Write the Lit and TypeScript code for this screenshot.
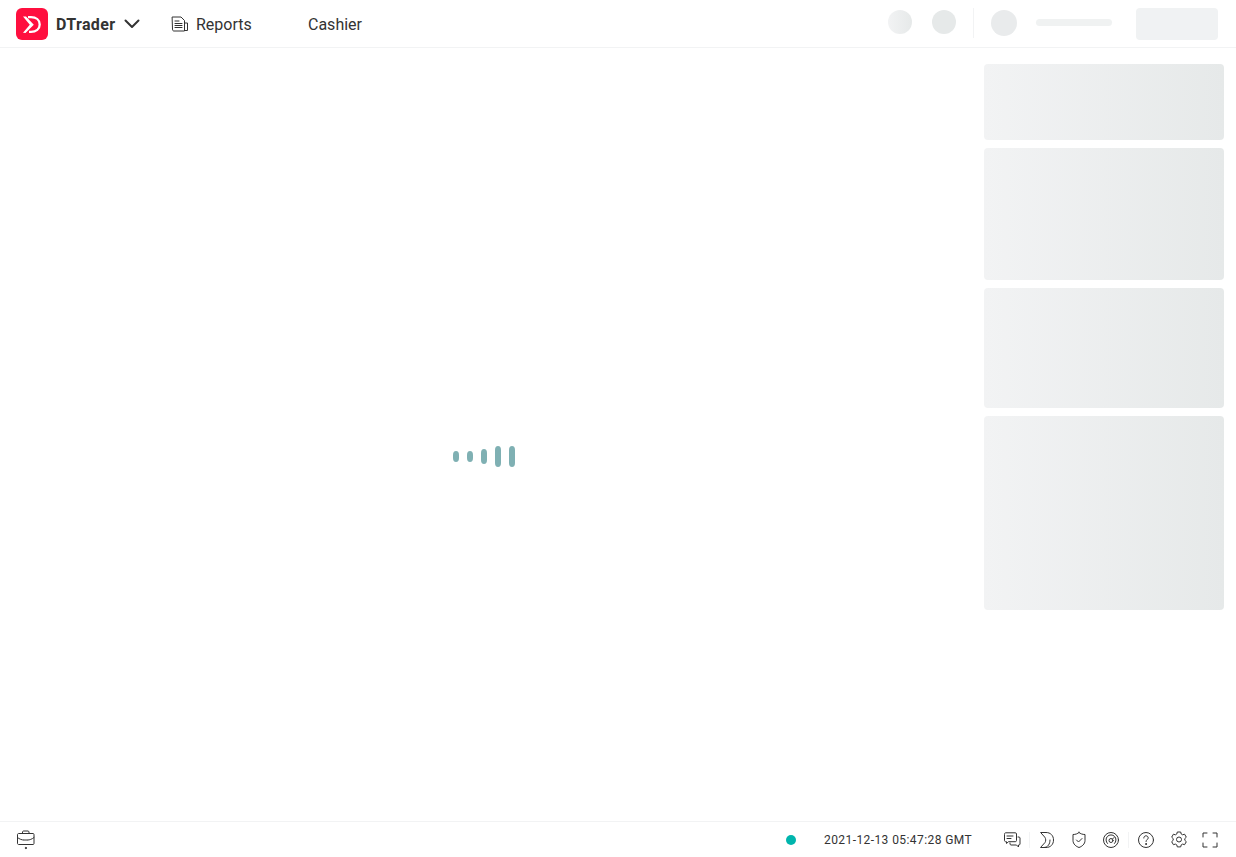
import { LitElement, html, css, svg } from "lit";
import { customElement } from "lit/decorators.js";

const ic = (w: number, h: number, body: unknown) => html`<svg width=${w} height=${h} viewBox="0 0 ${w} ${h}" fill="none" stroke="#333" stroke-width="1" stroke-linecap="round" stroke-linejoin="round">${body}</svg>`;

@customElement("app-root")
export class AppRoot extends LitElement {
  static styles = css`
    :host { display: flex; flex-direction: column; width: 1236px; height: 857px; background: #fff; font-family: Roboto, "Liberation Sans", sans-serif; color: #333; overflow: hidden; }
    header { height: 47px; flex: none; display: flex; align-items: center; border-bottom: 1px solid #f2f3f4; padding-left: 16px; }
    .logo { display: block; width: 32px; height: 32px; }
    .brand { margin-left: 8px; margin-top: 1px; font-size: 16px; font-weight: 700; letter-spacing: 0.35px; width: 60px; }
    .chev { margin-left: 8px; display: block; }
    .rep { margin-left: 31px; margin-top: 1px; display: flex; align-items: center; gap: 7px; width: 137px; font-size: 16px; }
    .rep svg { display: block; }
    .cash { font-size: 16px; margin-top: 1px; }
    .hr { margin-left: auto; display: flex; align-items: center; padding-right: 18px; }
    .sk { background: linear-gradient(90deg, #f2f3f4, #e6e9e9); }
    .c1 { width: 24px; height: 24px; border-radius: 50%; margin-top: -4px; }
    .c1.b { margin-left: 20px; background: #e6e9e9; }
    .div { width: 1px; height: 30px; background: #f2f3f4; margin: -2px 17px 0 17px; }
    .c2 { width: 26px; height: 26px; border-radius: 50%; background: #e9ebec; margin-top: -1px; }
    .line { width: 76px; height: 7px; border-radius: 4px; background: #f0f2f2; margin-left: 19px; margin-top: -2px; }
    .btn { width: 82px; height: 32px; border-radius: 4px; background: #f0f2f3; margin-left: 24px; }
    main { flex: 1; display: flex; min-height: 0; padding: 16px 12px 0 0; box-sizing: border-box; }
    .stage { width: 968px; flex: none; padding-top: 28px; display: flex; align-items: center; justify-content: center; box-sizing: border-box; }
    .loader { display: flex; align-items: center; gap: 8px; }
    .loader i { display: block; width: 6px; border-radius: 3px / 4px; background: #7fb0b3; }
    .side { margin-left: 16px; width: 240px; display: flex; flex-direction: column; gap: 8px; }
    .card { border-radius: 4px; }
    footer { height: 35px; flex: none; display: flex; align-items: center; border-top: 1px solid #f2f3f4; padding: 0 18px 0 16px; }
    footer svg { display: block; }
    .foot-r { margin-left: auto; display: flex; align-items: center; }
    .dot { width: 10px; height: 10px; border-radius: 50%; background: #00b5ad; }
    .time { margin-left: 28px; font-size: 12px; color: #333; width: 148px; white-space: nowrap; letter-spacing: 0.42px; }
    .ficons { margin-left: 31px; display: flex; align-items: center; }
    .sep { width: 1px; height: 16px; background: #f2f3f4; }
    .g15 { width: 15px; } .g16 { width: 16px; }
    .s1 { margin: 0 8px 0 8px; }
    .gear { margin-top: -1px; }
  `;

  render() {
    return html`
      <header>
        <svg class="logo" viewBox="0 0 32 32">
          <rect width="32" height="32" rx="6" fill="#ff0f3f"></rect>
          <path d="M12 9.200H15C20 9.200 23.700 12 23.700 16.500C23.700 21 20 23.800 15 23.800H13" fill="none" stroke="#fff" stroke-width="2.300"></path>
          <path d="M7 8.500L10 8.500L17.800 16.800L9.500 25L7 24.800L13.800 16.800Z" fill="#fff"></path>
        </svg>
        <span class="brand">DTrader</span>
        <svg class="chev" width="16" height="16" viewBox="0 0 16 16" fill="none" stroke="#333" stroke-width="2" stroke-linecap="round" stroke-linejoin="round"><path d="M1.500 4.500L8 11l6.500-6.500"></path></svg>
        <div class="rep">
          ${ic(18, 16, svg`<path d="M1.500 1h8.500l3.500 3.500v10.500h-10.500c-1 0-1.500-.5-1.500-1.500zM13.500 7h3v7.500h-3M4 5h4M4 7.500h7M4 9.500h7M4 11.500h7"></path>`)}
          <span>Reports</span>
        </div>
        <span class="cash">Cashier</span>
        <div class="hr">
          <div class="sk c1"></div>
          <div class="c1 b"></div>
          <div class="div"></div>
          <div class="c2"></div>
          <div class="line"></div>
          <div class="btn"></div>
        </div>
      </header>
      <main>
        <div class="stage">
          <div class="loader">
            <i style="height:11px"></i><i style="height:11px"></i><i style="height:15px"></i><i style="height:21px"></i><i style="height:21px"></i>
          </div>
        </div>
        <div class="side">
          ${[76, 132, 120, 194].map((h) => html`<div class="sk card" style="height:${h}px"></div>`)}
        </div>
      </main>
      <footer>
        ${ic(20, 20, svg`<path d="M1.500 4.500c0-.7.500-1 1-1h14.500c.5 0 1 .3 1 1v9c0 .7-.5 1-1 1H2.500c-.5 0-1-.3-1-1zM6.500 3.500V2c0-.5.500-1 1-1h4.500c.5 0 1 .5 1 1v1.500M1.500 7.500c2 1.700 4.500 2.500 6 2.500M12 10c1.500 0 4-.8 6-2.500M8 10h3.500"></path><circle cx="9.800" cy="18" r=".6" fill="#333"></circle>`)}
        <div class="foot-r">
          <div class="dot"></div>
          <span class="time">2021-12-13 05:47:28 GMT</span>
          <div class="ficons">
            ${ic(18, 18, svg`<path d="M1.500 3c0-.8.500-1.200 1.200-1.200h9.600c.7 0 1.200.4 1.200 1.200v6.500c0 .7-.5 1.200-1.200 1.200H5.500l-2 1.800v-1.800h-.8c-.7 0-1.200-.5-1.200-1.200zM4 5h6M4 7.500h4M15 6h1c.5 0 1 .5 1 1v6c0 .5-.5 1-1 1h-.5v2l-2-2H8c-.5 0-1-.5-1-1v-1"></path>`)}
            <div class="sep s1"></div>
            ${ic(18, 18, svg`<path d="M3 1.500h5c4.500 0 7.500 3 7.500 7.500s-3 7.500-7.500 7.500H2.500L7 11.500c1-1.500 1-3.500 0-5zM6 16.500c4 0 6-3.500 6-7.500"></path>`)}
            <div class="g15"></div>
            ${ic(16, 18, svg`<path d="M8 1.500c1.500 1.300 3.500 2 6 2v6c0 3.500-3 6-6 7-3-1-6-3.500-6-7v-6c2.500 0 4.500-.7 6-2z"></path><path d="M5.500 9l2 2 3.500-3.500"></path>`)}
            <div class="g15"></div>
            ${ic(18, 18, svg`<circle cx="9" cy="9" r="7.500"></circle><path d="M5.500 12.500A5 5 0 1 1 12.500 12.500"></path><circle cx="9" cy="9.500" r="2"></circle><path d="M10.500 8l1.500-1.500"></path>`)}
            <div class="sep s1"></div>
            ${ic(18, 18, svg`<circle cx="9" cy="9" r="7.500"></circle><path d="M6.800 7c0-1.300 1-2.200 2.200-2.200s2.200.9 2.200 2.100c0 1.700-2.200 1.700-2.200 3.600"></path><circle cx="9" cy="13" r=".5" fill="#333"></circle>`)}
            <div class="g16"></div>
            <svg class="gear" width="16" height="17" viewBox="0 0 16 17" fill="none" stroke="#333" stroke-width="1" stroke-linejoin="round"><path d="M6.300 1h3.400l.5 2 1.400.8 2-.6 1.700 3-1.500 1.400v1.700l1.500 1.400-1.700 3-2-.6-1.400.8-.5 2H6.300l-.5-2-1.400-.8-2 .6-1.700-3L2.200 9.300V7.600L.7 6.200l1.700-3 2 .6 1.400-.8z"></path><circle cx="8" cy="8.500" r="2.500"></circle></svg>
            <div class="g15"></div>
            ${ic(16, 16, svg`<path d="M1 5V1h4M11 1h4v4M15 11v4h-4M5 15H1v-4"></path>`)}
          </div>
        </div>
      </footer>
    `;
  }
}
